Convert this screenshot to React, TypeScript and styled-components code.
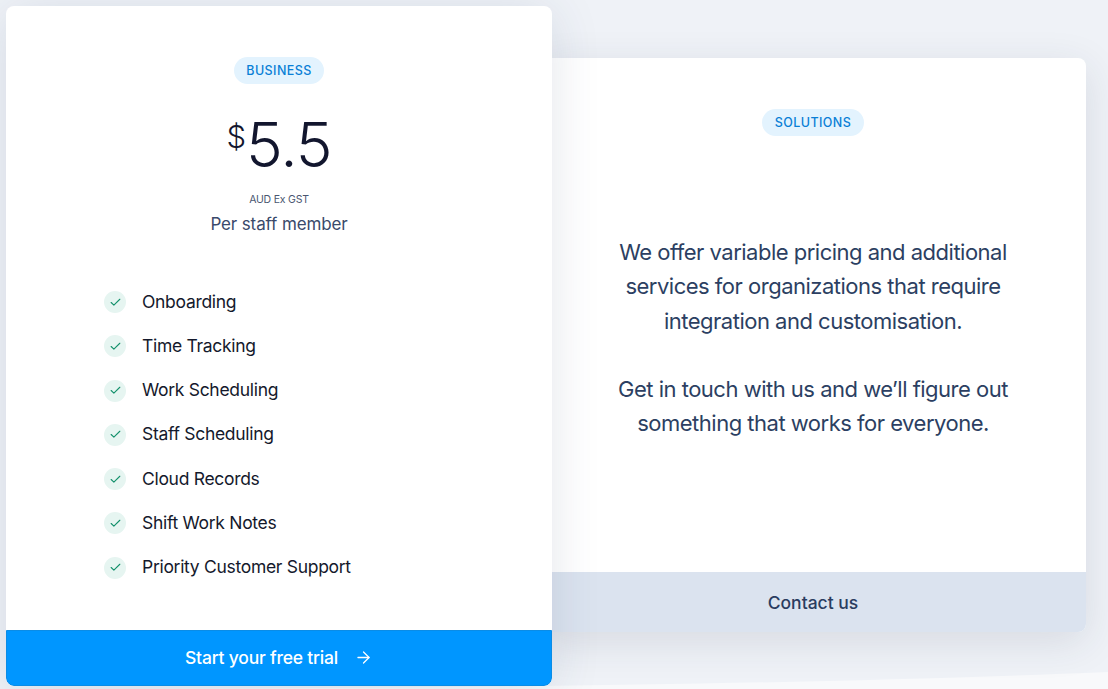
import React from "react";
import styled, { createGlobalStyle } from "styled-components";
import { ArrowRight, Check } from "lucide-react";

const FEATURES = [
  "Onboarding",
  "Time Tracking",
  "Work Scheduling",
  "Staff Scheduling",
  "Cloud Records",
  "Shift Work Notes",
  "Priority Customer Support",
];

const GlobalStyle = createGlobalStyle`
  html, body {
    margin: 0;
    padding: 0;
    height: 100%;
    overflow: hidden;
    background: #ffffff;
    font-family: Inter, "Noto Sans", sans-serif;
  }
  * {
    box-sizing: border-box;
  }
`;

const Page = styled.div`
  position: relative;
  width: 1108px;
  height: 689px;
  overflow: hidden;
  display: flex;
  align-items: flex-start;
  padding: 6px 22px 0 6px;
  background: #eff2f7;
`;

const Wave = styled.svg`
  position: absolute;
  left: 0;
  bottom: 0;
  width: 1108px;
  height: 40px;
`;

const LeftCard = styled.section`
  position: relative;
  z-index: 2;
  width: 546px;
  height: 680px;
  flex: none;
  display: flex;
  flex-direction: column;
  background: #ffffff;
  border-radius: 8px;
  overflow: hidden;
  box-shadow: 0 6px 50px rgba(40, 60, 100, 0.13);
`;

const RightCard = styled.section`
  position: relative;
  z-index: 1;
  width: 546px;
  height: 574px;
  flex: none;
  margin: 52px 0 0 -12px;
  display: flex;
  flex-direction: column;
  background: #ffffff;
  border-radius: 8px;
  overflow: hidden;
  box-shadow: 0 10px 40px rgba(40, 50, 70, 0.12);
`;

const CardBody = styled.div`
  flex: 1;
  display: flex;
  flex-direction: column;
  align-items: center;
  padding-top: 51px;
`;

const Badge = styled.span`
  display: inline-flex;
  align-items: center;
  justify-content: center;
  height: 27px;
  padding: 0 0 1px;
  width: ${(p: { $width: number }) => p.$width}px;
  border-radius: 14px;
  background: #e3f3fe;
  color: #0a7fd6;
  font-size: 12.5px;
  font-weight: 500;
  letter-spacing: 0.4px;
`;

const Price = styled.div`
  display: flex;
  align-items: flex-start;
  margin-top: 30px;
  height: 62px;
  color: #12162e;
  font-weight: 300;
  line-height: 62px;
`;

const Currency = styled.span`
  font-size: 31px;
  line-height: 46px;
`;

const Amount = styled.span`
  font-size: 62px;
  letter-spacing: -1px;
`;

const TaxNote = styled.div`
  margin-top: 17px;
  font-size: 10.5px;
  line-height: 14px;
  letter-spacing: -0.2px;
  color: #4a5670;
`;

const Unit = styled.div`
  margin-top: 5px;
  font-size: 17px;
  line-height: 24px;
  letter-spacing: -0.12px;
  color: #3a4a6b;
`;

const FeatureList = styled.ul`
  align-self: stretch;
  list-style: none;
  margin: 51px 0 0;
  padding: 0 0 0 98px;
  display: flex;
  flex-direction: column;
  gap: 16.25px;
`;

const Feature = styled.li`
  display: flex;
  align-items: center;
  gap: 16px;
  height: 28px;
  font-size: 17.5px;
  letter-spacing: -0.3px;
  color: #14192c;
`;

const CheckDot = styled.span`
  width: 22px;
  height: 22px;
  flex: none;
  margin-top: 2px;
  display: flex;
  align-items: center;
  justify-content: center;
  border-radius: 50%;
  background: #e6f5f1;
  color: #14916c;
`;

const StartButton = styled.button`
  height: 56px;
  flex: none;
  display: flex;
  align-items: center;
  justify-content: center;
  gap: 16px;
  padding: 0 0 2px;
  border: 1px solid #0a8ce6;
  border-radius: 0 0 8px 8px;
  background: #0096ff;
  color: #ffffff;
  font: 500 17.5px Inter, "Noto Sans", sans-serif;
  letter-spacing: -0.2px;
`;

const Blurb = styled.p`
  margin: 99px 0 0;
  width: 420px;
  text-align: center;
  font-size: 22px;
  line-height: 34.3px;
  letter-spacing: -0.5px;
  color: #2c3f62;
`;

const ContactButton = styled.button`
  height: 60px;
  flex: none;
  border: 0;
  background: #dbe3ef;
  color: #2a3c60;
  font: 500 17.5px Inter, "Noto Sans", sans-serif;
`;

export default function App() {
  return (
    <>
      <GlobalStyle />
      <Page>
        <Wave viewBox="0 0 1108 40" preserveAspectRatio="none">
          <path d="M0 40 C 400 40 800 36 1108 23 L1108 40 Z" fill="#f8f9fb" />
        </Wave>
        <LeftCard>
          <CardBody>
            <Badge $width={90}>BUSINESS</Badge>
            <Price>
              <Currency>$</Currency>
              <Amount>5.5</Amount>
            </Price>
            <TaxNote>AUD Ex GST</TaxNote>
            <Unit>Per staff member</Unit>
            <FeatureList>
              {FEATURES.map((name) => (
                <Feature key={name}>
                  <CheckDot>
                    <Check size={13} strokeWidth={2} />
                  </CheckDot>
                  {name}
                </Feature>
              ))}
            </FeatureList>
          </CardBody>
          <StartButton>
            Start your free trial
            <ArrowRight size={19} strokeWidth={1.6} />
          </StartButton>
        </LeftCard>
        <RightCard>
          <CardBody>
            <Badge $width={102}>SOLUTIONS</Badge>
            <Blurb>
              We offer variable pricing and additional services for organizations that require
              integration and customisation.
              <br />
              <br />
              Get in touch with us and we’ll figure out something that works for everyone.
            </Blurb>
          </CardBody>
          <ContactButton>Contact us</ContactButton>
        </RightCard>
      </Page>
    </>
  );
}
